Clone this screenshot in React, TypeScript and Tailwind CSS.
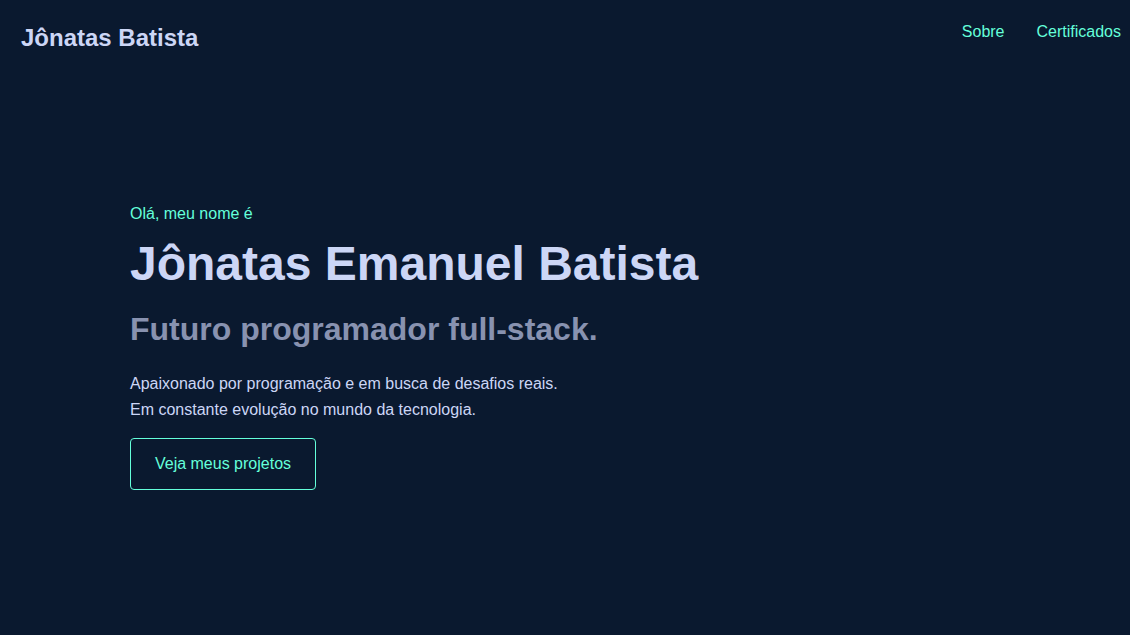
import React from "react";

const App = () => {
  return (
    <div className="min-h-[635px] w-full bg-[#0a192f] font-['Liberation_Sans',Arial,sans-serif]">
      <header className="flex items-start justify-between pl-[21px] pr-[9px]">
        <h1 className="mt-[22px] text-[24px] font-bold leading-[32px] text-[#ccd6f6]">
          Jônatas Batista
        </h1>
        <nav className="mt-[20px] flex gap-[32px] text-[16px] leading-[24px] text-[#64ffda]">
          <a href="#sobre">Sobre</a>
          <a href="#certificados">Certificados</a>
        </nav>
      </header>

      <section className="flex flex-col items-start pl-[130px] pt-[148px]">
        <p className="text-[16px] leading-[24px] text-[#64ffda]">Olá, meu nome é</p>
        <h2 className="mt-[10px] text-[48px] font-bold leading-[56px] text-[#ccd6f6]">
          Jônatas Emanuel Batista
        </h2>
        <h3 className="mt-[17px] text-[32px] font-bold leading-[40px] text-[#8892b0]">
          Futuro programador full-stack.
        </h3>
        <p className="mt-[22px] text-[16px] leading-[26px] text-[#ccd6f6]">
          Apaixonado por programação e em busca de desafios reais.
          <br />
          Em constante evolução no mundo da tecnologia.
        </p>
        <button className="mt-[15px] h-[52px] w-[186px] rounded-[4px] border border-[#64ffda] text-[16px] text-[#64ffda]">
          Veja meus projetos
        </button>
      </section>
    </div>
  );
};

export default App;
